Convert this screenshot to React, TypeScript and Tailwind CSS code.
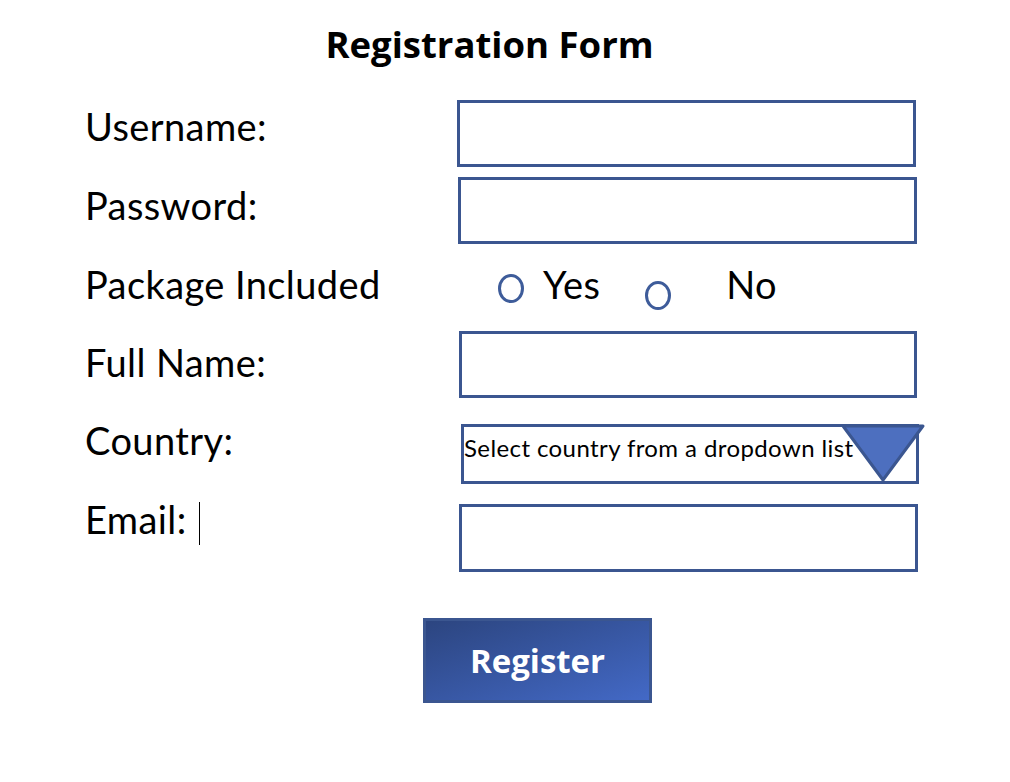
import React from 'react';

const boxBorder = 'border-[3.5px] border-[#3b5690] bg-white';
const labelFont = { fontFamily: 'Lato, "Noto Sans", sans-serif' };

function Label({ text, top }: { text: string; top: string }) {
  return (
    <div className={`w-[372px] shrink-0 text-[38px] leading-[40px] tracking-[0.4px] text-black ${top}`} style={labelFont}>
      {text}
    </div>
  );
}

function Radio({ className }: { className: string }) {
  return <span className={`inline-block w-[26px] h-[29px] rounded-[50%] border-[3px] border-[#3e5c9a] ${className}`} />;
}

export default function App() {
  return (
    <div className="w-[1010px] h-[782px] bg-white overflow-hidden">
      {/* Title */}
      <div className="h-[100px] pt-[22px] pr-[31px] text-center">
        <h1 className="text-[36.5px] leading-[44px] font-bold text-black" style={{ fontFamily: '"Open Sans", sans-serif' }}>
          Registration Form
        </h1>
      </div>

      <form className="pl-[85px] flex flex-col">
        {/* Username */}
        <div className="flex h-[67px]">
          <Label text="Username:" top="mt-[6px]" />
          <div className={`w-[459px] h-[67px] ${boxBorder}`} />
        </div>

        {/* Password */}
        <div className="flex h-[67px] mt-[10px]">
          <Label text="Password:" top="mt-[8px]" />
          <div className={`ml-[1px] w-[459px] h-[67px] ${boxBorder}`} />
        </div>

        {/* Package Included */}
        <div className="flex h-[87px]">
          <Label text="Package Included" top="mt-[20px]" />
          <div className="flex items-start text-[38px] leading-[40px] tracking-[0.4px] text-black" style={labelFont}>
            <Radio className="ml-[41px] mt-[30px]" />
            <span className="ml-[19px] mt-[20px]">Yes</span>
            <Radio className="ml-[45px] mt-[37px]" />
            <span className="ml-[55px] mt-[20px]">No</span>
          </div>
        </div>

        {/* Full Name */}
        <div className="flex h-[67px]">
          <Label text="Full Name:" top="mt-[11px]" />
          <div className={`ml-[2px] w-[458px] h-[67px] ${boxBorder}`} />
        </div>

        {/* Country */}
        <div className="flex h-[60px] mt-[26px]">
          <Label text="Country:" top="-mt-[4px]" />
          <div className="relative ml-[4px] w-[458px] h-[60px] border-[3px] border-[#3b5690] bg-white flex items-start">
            <span className="pt-[7px] text-[24px] leading-[28px] tracking-[0.4px] text-black" style={labelFont}>
              Select country from a dropdown list
            </span>
            <svg className="absolute -right-[9px] -top-[3px]" width="84" height="58" viewBox="0 0 84 58">
              <polygon points="2,2 82,2 42,56" fill="#4d6fbf" stroke="#3b5690" strokeWidth="3" strokeLinejoin="round" />
            </svg>
          </div>
        </div>

        {/* Email */}
        <div className="flex h-[68px] mt-[20px]">
          <div className="w-[372px] shrink-0 flex items-start">
            <span className="mt-[-5px] text-[38px] leading-[40px] tracking-[0.4px] text-black" style={labelFont}>Email:</span>
            <span className="ml-[12px] -mt-[2px] w-[1.5px] h-[43px] bg-black" />
          </div>
          <div className={`ml-[2px] w-[459px] h-[68px] ${boxBorder}`} />
        </div>
      </form>

      {/* Register button */}
      <div className="mt-[46px] flex pl-[423px]">
        <button
          type="button"
          className="w-[229px] h-[85px] border-[3px] border-[#3b5690] bg-gradient-to-br from-[#2c4580] to-[#4369c6] text-white text-[33px] font-bold leading-none"
          style={{ fontFamily: '"Open Sans", sans-serif' }}
        >
          Register
        </button>
      </div>
    </div>
  );
}
